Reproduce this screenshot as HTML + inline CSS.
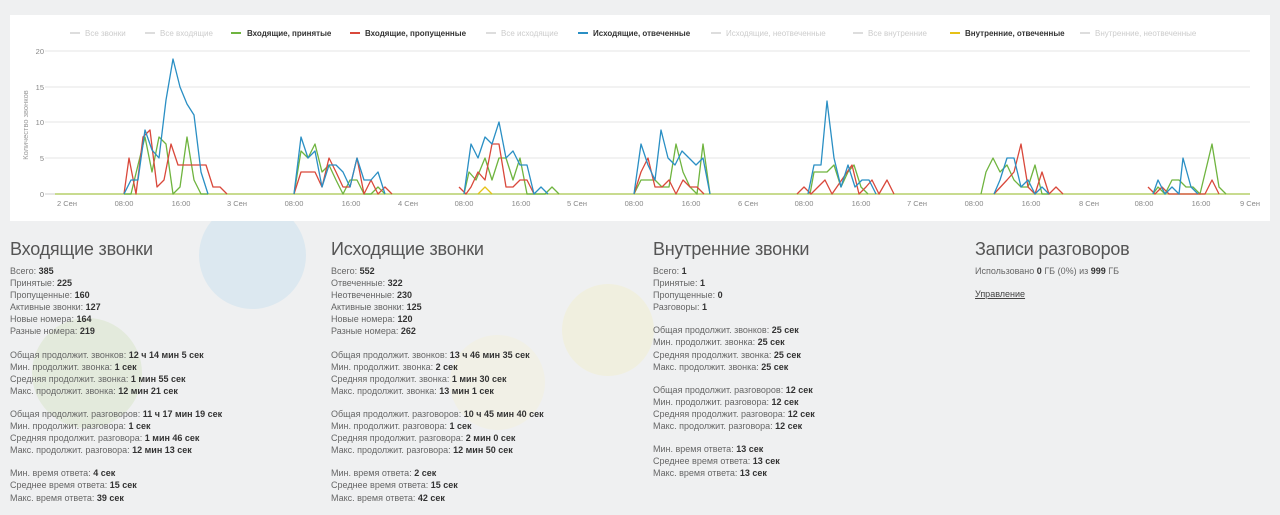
<!DOCTYPE html>
<html><head><meta charset="utf-8"><style>
*{margin:0;padding:0;box-sizing:border-box}
body{width:1280px;height:506px;overflow:hidden;background:#eff0f1;font-family:"Liberation Sans",sans-serif;position:relative;color:#555}
.c{position:absolute;border-radius:50%}
.chart{position:absolute;left:10px;top:15px;width:1260px;height:206px;background:#fff}
.col{position:absolute;top:238px;font-size:9px;line-height:12.1px;color:#666}
.col h2{font-weight:normal;font-size:18px;color:#555;line-height:22px;margin-bottom:5px;letter-spacing:-0.2px}
.col b{color:#333}
.col p{margin-bottom:11px}
a{color:#444;text-decoration:underline}
</style></head><body>
<div class="c" style="left:199px;top:202px;width:107px;height:107px;background:#dce8f0"></div>
<div class="c" style="left:32px;top:318px;width:110px;height:110px;background:#e3eadc"></div>
<div class="c" style="left:562px;top:284px;width:92px;height:92px;background:#f0efdf"></div>
<div class="c" style="left:450px;top:335px;width:95px;height:95px;background:#f1f0e6"></div>
<div class="chart"></div>
<svg style="position:absolute;left:0;top:0" width="1280" height="230" font-family="Liberation Sans,sans-serif">
<g font-size="8" fill="#ccc">
<line x1="70" y1="33" x2="80" y2="33" stroke="#ddd" stroke-width="2"/><text x="85" y="36">Все звонки</text>
<line x1="145" y1="33" x2="155" y2="33" stroke="#ddd" stroke-width="2"/><text x="160" y="36">Все входящие</text>
<line x1="231" y1="33" x2="241" y2="33" stroke="#6fb43f" stroke-width="2"/><text x="247" y="36" fill="#333" font-weight="bold">Входящие, принятые</text>
<line x1="350" y1="33" x2="360" y2="33" stroke="#d9483b" stroke-width="2"/><text x="365" y="36" fill="#333" font-weight="bold">Входящие, пропущенные</text>
<line x1="486" y1="33" x2="496" y2="33" stroke="#ddd" stroke-width="2"/><text x="501" y="36">Все исходящие</text>
<line x1="578" y1="33" x2="588" y2="33" stroke="#2a8fc4" stroke-width="2"/><text x="593" y="36" fill="#333" font-weight="bold">Исходящие, отвеченные</text>
<line x1="711" y1="33" x2="721" y2="33" stroke="#ddd" stroke-width="2"/><text x="726" y="36">Исходящие, неотвеченные</text>
<line x1="853" y1="33" x2="863" y2="33" stroke="#ddd" stroke-width="2"/><text x="868" y="36">Все внутренние</text>
<line x1="950" y1="33" x2="960" y2="33" stroke="#e6c117" stroke-width="2"/><text x="965" y="36" fill="#333" font-weight="bold">Внутренние, отвеченные</text>
<line x1="1080" y1="33" x2="1090" y2="33" stroke="#ddd" stroke-width="2"/><text x="1095" y="36">Внутренние, неотвеченные</text>
</g>
<g stroke="#e6e6e6" stroke-width="1">
<line x1="45" y1="51" x2="1250" y2="51"/><line x1="45" y1="87" x2="1250" y2="87"/><line x1="45" y1="122" x2="1250" y2="122"/><line x1="45" y1="158" x2="1250" y2="158"/>
</g>
<line x1="45" y1="194" x2="1250" y2="194" stroke="#ccc"/>
<g font-size="7.5" fill="#888" text-anchor="end">
<text x="44" y="54">20</text><text x="44" y="90">15</text><text x="44" y="125">10</text><text x="44" y="161">5</text><text x="44" y="197">0</text>
</g>
<text transform="translate(28,125) rotate(-90)" font-size="7.5" fill="#999" text-anchor="middle">Количество звонков</text>
<g font-size="7.5" fill="#888" text-anchor="middle">
<text x="67" y="206">2 Сен</text><text x="124" y="206">08:00</text><text x="181" y="206">16:00</text>
<text x="237" y="206">3 Сен</text><text x="294" y="206">08:00</text><text x="351" y="206">16:00</text>
<text x="408" y="206">4 Сен</text><text x="464" y="206">08:00</text><text x="521" y="206">16:00</text>
<text x="577" y="206">5 Сен</text><text x="634" y="206">08:00</text><text x="691" y="206">16:00</text>
<text x="748" y="206">6 Сен</text><text x="804" y="206">08:00</text><text x="861" y="206">16:00</text>
<text x="917" y="206">7 Сен</text><text x="974" y="206">08:00</text><text x="1031" y="206">16:00</text>
<text x="1089" y="206">8 Сен</text><text x="1144" y="206">08:00</text><text x="1201" y="206">16:00</text>
<text x="1250" y="206">9 Сен</text>
</g>
<g fill="none" stroke-width="1.3" stroke-linejoin="round">
<line x1="55" y1="194" x2="1250" y2="194" stroke="#b6cf6a" stroke-width="1.5"/>
<g stroke="#6fb43f">
<polyline points="124,194 131,194 138,165 145,137 152,172 159,137 166,144 173,194 180,187 187,137 194,180 201,194 208,194"/>
<polyline points="294,194 301,151 308,158 315,144 322,172 329,165 336,180 343,194 350,180 357,180 364,194 371,194 378,187 385,194"/>
<polyline points="464,194 469,172 476,180 485,158 492,180 499,158 506,158 513,180 520,158 527,194 545,194 552,187 559,194"/>
<polyline points="634,194 641,180 655,180 662,187 669,187 676,144 683,172 690,187 697,194 703,144 710,194"/>
<polyline points="810,194 814,172 827,172 834,165 841,187 848,172 854,165 861,187 868,194"/>
<polyline points="981,194 986,172 993,158 1000,172 1007,165 1014,180 1021,187 1028,187 1035,165 1042,194 1049,194"/>
<polyline points="1153,194 1158,187 1165,194 1172,180 1179,180 1186,187 1193,187 1200,194 1207,165 1212,144 1219,187 1226,194"/>
</g>
<g stroke="#d9483b">
<polyline points="124,194 129,158 136,194 143,137 150,130 157,187 164,180 171,144 178,165 185,165 192,165 199,165 206,165 213,187 220,187 227,194"/>
<polyline points="294,194 301,172 308,172 315,172 322,187 329,158 336,172 343,187 350,187 357,158 364,194 371,180 378,194 385,187 392,194"/>
<polyline points="459,187 466,194 471,187 478,172 485,180 492,144 499,144 506,187 513,187 520,180 527,180 534,194"/>
<polyline points="634,194 641,172 648,158 655,187 662,187 669,180 676,194 683,180 690,187 697,187 704,194"/>
<polyline points="797,194 804,187 811,194 818,187 825,180 832,194 852,165 859,194 866,187 872,180 879,194 887,180 894,194"/>
<polyline points="994,194 1007,180 1014,172 1021,144 1028,187 1035,194 1042,172 1049,194 1056,187 1063,194"/>
<polyline points="1148,187 1155,194 1162,187 1169,194 1205,194 1212,180 1219,194"/>
</g>
<g stroke="#2a8fc4">
<polyline points="124,194 131,180 138,180 145,130 152,150 159,158 166,100 173,59 180,87 187,104 194,115 201,172 208,194"/>
<polyline points="294,194 301,137 308,158 315,151 322,187 329,165 336,165 343,172 350,187 357,158 364,180 371,180 378,172 385,194"/>
<polyline points="464,194 471,144 478,158 485,137 492,144 499,122 506,158 513,151 520,165 527,165 534,194 541,187 548,194"/>
<polyline points="634,194 641,144 648,165 655,180 661,130 668,158 675,165 682,151 689,158 696,165 703,158 710,194"/>
<polyline points="808,194 814,165 821,165 827,101 834,158 841,187 848,165 855,187 862,180 869,180 876,194"/>
<polyline points="994,194 1000,180 1007,158 1014,158 1021,187 1028,180 1035,194 1042,187 1049,194"/>
<polyline points="1153,194 1158,180 1165,194 1172,187 1179,194 1183,158 1191,187 1198,194"/>
</g>
<polyline stroke="#e6c117" points="478,194 485,187 492,194"/>
</g>
</svg>
<div class="col" style="left:10px"><h2>Входящие звонки</h2>
<p>Всего: <b>385</b><br>Принятые: <b>225</b><br>Пропущенные: <b>160</b><br>Активные звонки: <b>127</b><br>Новые номера: <b>164</b><br>Разные номера: <b>219</b></p>
<p>Общая продолжит. звонков: <b>12 ч 14 мин 5 сек</b><br>Мин. продолжит. звонка: <b>1 сек</b><br>Средняя продолжит. звонка: <b>1 мин 55 сек</b><br>Макс. продолжит. звонка: <b>12 мин 21 сек</b></p>
<p>Общая продолжит. разговоров: <b>11 ч 17 мин 19 сек</b><br>Мин. продолжит. разговора: <b>1 сек</b><br>Средняя продолжит. разговора: <b>1 мин 46 сек</b><br>Макс. продолжит. разговора: <b>12 мин 13 сек</b></p>
<p>Мин. время ответа: <b>4 сек</b><br>Среднее время ответа: <b>15 сек</b><br>Макс. время ответа: <b>39 сек</b></p></div>
<div class="col" style="left:331px"><h2>Исходящие звонки</h2>
<p>Всего: <b>552</b><br>Отвеченные: <b>322</b><br>Неотвеченные: <b>230</b><br>Активные звонки: <b>125</b><br>Новые номера: <b>120</b><br>Разные номера: <b>262</b></p>
<p>Общая продолжит. звонков: <b>13 ч 46 мин 35 сек</b><br>Мин. продолжит. звонка: <b>2 сек</b><br>Средняя продолжит. звонка: <b>1 мин 30 сек</b><br>Макс. продолжит. звонка: <b>13 мин 1 сек</b></p>
<p>Общая продолжит. разговоров: <b>10 ч 45 мин 40 сек</b><br>Мин. продолжит. разговора: <b>1 сек</b><br>Средняя продолжит. разговора: <b>2 мин 0 сек</b><br>Макс. продолжит. разговора: <b>12 мин 50 сек</b></p>
<p>Мин. время ответа: <b>2 сек</b><br>Среднее время ответа: <b>15 сек</b><br>Макс. время ответа: <b>42 сек</b></p></div>
<div class="col" style="left:653px"><h2>Внутренние звонки</h2>
<p>Всего: <b>1</b><br>Принятые: <b>1</b><br>Пропущенные: <b>0</b><br>Разговоры: <b>1</b></p>
<p>Общая продолжит. звонков: <b>25 сек</b><br>Мин. продолжит. звонка: <b>25 сек</b><br>Средняя продолжит. звонка: <b>25 сек</b><br>Макс. продолжит. звонка: <b>25 сек</b></p>
<p>Общая продолжит. разговоров: <b>12 сек</b><br>Мин. продолжит. разговора: <b>12 сек</b><br>Средняя продолжит. разговора: <b>12 сек</b><br>Макс. продолжит. разговора: <b>12 сек</b></p>
<p>Мин. время ответа: <b>13 сек</b><br>Среднее время ответа: <b>13 сек</b><br>Макс. время ответа: <b>13 сек</b></p></div>
<div class="col" style="left:975px"><h2>Записи разговоров</h2>
<p>Использовано <b>0</b> ГБ (0%) из <b>999</b> ГБ</p>
<p><a>Управление</a></p></div>
</body></html>
